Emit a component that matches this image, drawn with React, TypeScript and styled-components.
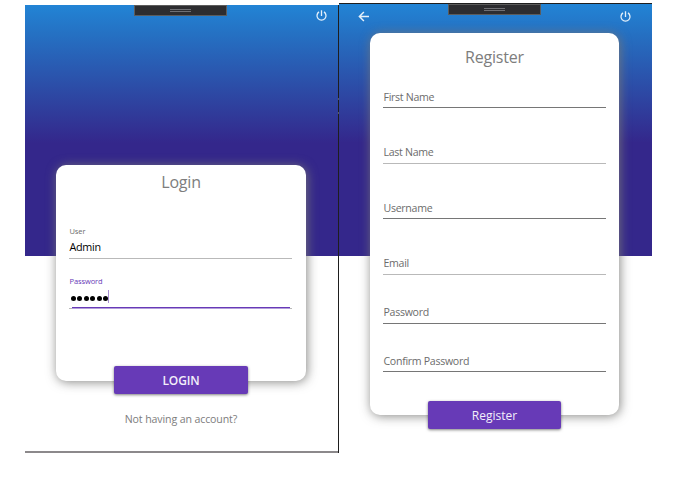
import React from 'react';
import styled, { createGlobalStyle } from 'styled-components';

const GlobalStyle = createGlobalStyle`
  * { box-sizing: border-box; }
  body { margin: 0; background: #fff; overflow: hidden; }
`;

const Stage = styled.div`
  display: flex;
  align-items: flex-start;
  width: 686px;
  height: 490px;
  padding: 3px 0 0 25px;
  font-family: 'Open Sans', 'Noto Sans', sans-serif;
  background: #fff;
`;

const Window = styled.section<{ $variant: 'login' | 'register' }>`
  position: relative;
  display: flex;
  flex-direction: column;
  align-items: center;
  ${({ $variant }) =>
    $variant === 'login'
      ? `width: 314px; height: 448px; margin-top: 2px; padding-right: 1px;
         border-right: 1px solid #1e1e1e;
         background: linear-gradient(#8c898b, #8c898b) 0 100% / 100% 2px no-repeat,
           linear-gradient(#2284d5 0, #2570c2 12%, #34278b 55%, #34278b 100%) 0 0 / 100% 251px no-repeat, #fff;`
      : `width: 313px; height: 450px; padding-right: 2px; border-top: 1px solid #1e1e1e;
         background: linear-gradient(#2284d5 0, #2570c2 12%, #34278b 55%, #34278b 100%) 0 0 / 100% 252px no-repeat;`}
`;

const TitleBar = styled.header<{ $height: number; $right: number }>`
  display: flex;
  flex: none;
  justify-content: space-between;
  width: 100%;
  height: ${({ $height }) => $height}px;
  padding: 4px ${({ $right }) => $right}px 0 18px;
`;

const Icon = styled.svg<{ $drop?: number }>`
  display: block;
  width: 14px;
  height: 14px;
  margin-top: ${({ $drop = 0 }) => $drop}px;
  fill: none;
  stroke: #e4f0fa;
`;

const Grip = styled.div`
  position: absolute;
  top: 0;
  left: 109px;
  display: flex;
  flex-direction: column;
  align-items: center;
  gap: 1px;
  width: 93px;
  height: 11px;
  padding-top: 3px;
  border: 1px solid #5c5c5c;
  background: #2d2d30;
`;

const GripLine = styled.i`
  width: 21px;
  height: 1px;
  background: #707074;
`;

const EdgeNotch = styled.i`
  position: absolute;
  top: 93px;
  right: -1px;
  width: 1px;
  height: 16px;
  border: solid #5a5a5a;
  border-width: 2px 0;
`;

const Card = styled.main<{ $width: number; $height: number; $title: number }>`
  display: flex;
  flex: none;
  flex-direction: column;
  width: ${({ $width }) => $width}px;
  height: ${({ $height }) => $height}px;
  padding: ${({ $title }) => $title}px 13px 0;
  border-radius: 10px;
  background: #fff;
  box-shadow: 1px 1px 11px 0 rgba(120, 120, 118, 0.9);
`;

const Heading = styled.h1`
  margin: 0;
  height: 22px;
  font-size: 16px;
  font-weight: 400;
  line-height: 22px;
  letter-spacing: -0.2px;
  text-align: center;
  color: #7d7d7d;
`;

const Field = styled.div<{ $height: number; $strong?: boolean; $gap?: number; $inset?: number }>`
  display: flex;
  flex: none;
  flex-direction: column;
  justify-content: flex-end;
  height: ${({ $height }) => $height}px;
  margin-right: ${({ $inset = 0 }) => $inset}px;
  padding: 0 0 ${({ $gap = 2 }) => $gap}px 0.5px;
  border-bottom: 1px solid ${({ $strong }) => ($strong ? '#767676' : '#b9b9b9')};
`;

const Label = styled.label<{ $small?: boolean; $active?: boolean }>`
  height: ${({ $small }) => ($small ? 11 : 16)}px;
  font-size: ${({ $small }) => ($small ? 7.5 : 10.6)}px;
  line-height: ${({ $small }) => ($small ? 11 : 16)}px;
  letter-spacing: ${({ $small }) => ($small ? -0.1 : -0.3)}px;
  color: ${({ $active }) => ($active ? '#673ab7' : '#6c6c6c')};
  white-space: nowrap;
`;

const Value = styled.div`
  display: flex;
  align-items: center;
  height: 17px;
  margin: 1px 0;
  font-size: 10.8px;
  line-height: 17px;
  letter-spacing: -0.3px;
  color: #000;
`;

const Dots = styled.span`
  display: flex;
  gap: 1.5px;
  margin-top: 3px;
  margin-left: 1px;
`;

const Dot = styled.i`
  width: 5px;
  height: 5px;
  border-radius: 50%;
  background: #000;
`;

const Caret = styled.i`
  width: 1px;
  height: 13px;
  background: #a78fd2;
`;

const ActiveLine = styled.div`
  flex: none;
  height: 2px;
  margin: -2px 3px 0 3px;
  background: linear-gradient(#673ab7 50%, #b39ddb 50%);
`;

const Spacer = styled.div<{ $height: number }>`
  flex: none;
  height: ${({ $height }) => $height}px;
`;

const Button = styled.button<{ $width: number; $bold?: boolean }>`
  flex: none;
  width: ${({ $width }) => $width}px;
  height: 28px;
  margin-top: ${({ $bold }) => ($bold ? -15 : -14)}px;
  padding: 0;
  border: 0;
  border-radius: 2px;
  background: #673ab7;
  box-shadow: 0 1px 3px rgba(0, 0, 0, 0.5);
  color: #f3effa;
  font: ${({ $bold }) => ($bold ? 600 : 400)} 12px/${({ $bold }) => ($bold ? 30 : 29)}px 'Open Sans', sans-serif;
  letter-spacing: ${({ $bold }) => ($bold ? -0.1 : 0)}px;
`;

const Hint = styled.a`
  margin-top: 17px;
  font-size: 10.6px;
  line-height: 17px;
  letter-spacing: -0.12px;
  color: #7d7d7d;
`;

const PowerIcon = ({ drop }: { drop: number }) => (
  <Icon viewBox="0 0 14 14" strokeWidth="1.3" $drop={drop}>
    <path d="M6.5 1.3V7M4 2.9A4.5 4.5 0 1 0 9 2.9" />
  </Icon>
);

const BackIcon = () => (
  <Icon viewBox="0 0 14 14" strokeWidth="1.5" $drop={1}>
    <path d="M12 7.5H2.4M6.9 3L2.4 7.5L6.9 12" />
  </Icon>
);

const WindowGrip = () => (
  <Grip>
    <GripLine />
    <GripLine />
  </Grip>
);

const registerFields = [
  { label: 'First Name', height: 36, strong: true, gap: 2 },
  { label: 'Last Name', height: 56, strong: false, gap: 3 },
  { label: 'Username', height: 55, strong: true, gap: 2 },
  { label: 'Email', height: 56, strong: false, gap: 3 },
  { label: 'Password', height: 49, strong: true, gap: 3 },
  { label: 'Confirm Password', height: 48, strong: true, gap: 2 },
];

export default function App() {
  return (
    <>
      <GlobalStyle />
      <Stage>
        <Window $variant="login">
          <WindowGrip />
          <EdgeNotch />
          <TitleBar $height={160} $right={8}>
            <span />
            <PowerIcon drop={0} />
          </TitleBar>
          <Card $width={250} $height={216} $title={6}>
            <Heading>Login</Heading>
            <Field $height={66} $inset={1}>
              <Label $small>User</Label>
              <Value>Admin</Value>
            </Field>
            <Field $height={50} $inset={1}>
              <Label $small $active>Password</Label>
              <Value>
                <Dots>{Array.from({ length: 6 }, (_, i) => <Dot key={i} />)}</Dots>
                <Caret />
              </Value>
            </Field>
            <ActiveLine />
          </Card>
          <Button $width={134} $bold>LOGIN</Button>
          <Hint>Not having an account?</Hint>
        </Window>
        <Window $variant="register">
          <WindowGrip />
          <TitleBar $height={29} $right={17}>
            <BackIcon />
            <PowerIcon drop={2} />
          </TitleBar>
          <Card $width={249} $height={382} $title={13}>
            <Heading>Register</Heading>
            <Spacer $height={4} />
            {registerFields.map(({ label, height, strong, gap }) => (
              <Field key={label} $height={height} $strong={strong} $gap={gap}>
                <Label>{label}</Label>
              </Field>
            ))}
          </Card>
          <Button $width={133}>Register</Button>
        </Window>
      </Stage>
    </>
  );
}
